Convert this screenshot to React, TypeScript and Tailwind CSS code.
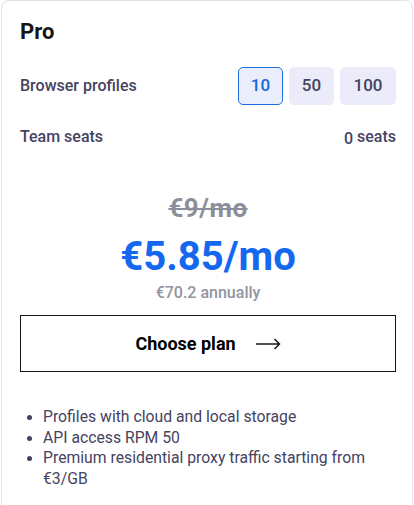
import { useState } from "react"

const profileOptions = [
  { value: 10, width: "w-[45px]" },
  { value: 50, width: "w-[45px]" },
  { value: 100, width: "w-[56px]" },
]

const features = [
  "Profiles with cloud and local storage",
  "API access RPM 50",
  "Premium residential proxy traffic starting from €3/GB",
]

export default function App() {
  const [profiles, setProfiles] = useState(10)

  return (
    <div className="bg-white min-h-[505px] font-['Roboto',sans-serif]">
      <div className="ml-[1px] w-[412px] min-h-[540px] border border-[#e3e3e6] rounded-[8px] pl-[18px] pr-[16px] pt-[17px]">
        <div className="text-[22px] font-bold text-[#161616] leading-[28px]">Pro</div>

        <div className="mt-[21px] flex items-center justify-between">
          <div className="text-[16px] font-medium text-[#45435f]">Browser profiles</div>
          <div className="flex gap-[6px]">
            {profileOptions.map((o) => (
              <button
                key={o.value}
                onClick={() => setProfiles(o.value)}
                className={
                  o.value === profiles
                    ? `h-[38px] ${o.width} rounded-[5px] border border-[#1d6fe0] bg-[#eaedfc] text-[17px] font-medium text-[#1767e0]`
                    : `h-[38px] ${o.width} rounded-[5px] border border-[#ebebfa] bg-[#ebebfa] text-[17px] font-medium text-[#45435f]`
                }
              >
                {o.value}
              </button>
            ))}
          </div>
        </div>

        <div className="mt-[21px] flex items-center justify-between leading-[22px]">
          <div className="text-[16px] font-medium text-[#45435f]">Team seats</div>
          <div className="text-[16px] font-medium text-[#45435f] flex items-baseline gap-[4px]">
            <span className="relative top-[2px]">0</span>
            <span>seats</span>
          </div>
        </div>

        <div className="mt-[45px] flex flex-col items-center">
          <div className="text-[26px] font-bold text-[#8b8f9b] line-through leading-[30px] tracking-[0.5px]">€9/mo</div>
          <div className="mt-[11px] text-[40px] font-bold text-[#1468f0] leading-[46px]">€5.85/mo</div>
          <div className="mt-[3px] text-[16px] font-medium text-[#9195a1] leading-[20px]">€70.2 annually</div>
        </div>

        <button className="mt-[12px] w-full h-[57px] border border-[#161616] flex items-center justify-center gap-[20px] text-[18px] font-bold text-black">
          <span>Choose plan</span>
          <svg width="25" height="12" viewBox="0 0 25 12" fill="none" stroke="#161616" strokeWidth="1.5">
            <path d="M0 6h23.5M18.5 1l5 5-5 5" />
          </svg>
        </button>

        <ul className="mt-[35px] pl-[7px] text-[15.75px] text-[#45435f] leading-[20.5px]">
          {features.map((f) => (
            <li key={f} className="flex">
              <span className="w-[16px] shrink-0 flex pt-[8px]">
                <span className="w-[5px] h-[5px] rounded-full bg-[#45435f]" />
              </span>
              <span>{f}</span>
            </li>
          ))}
        </ul>
      </div>
    </div>
  )
}
